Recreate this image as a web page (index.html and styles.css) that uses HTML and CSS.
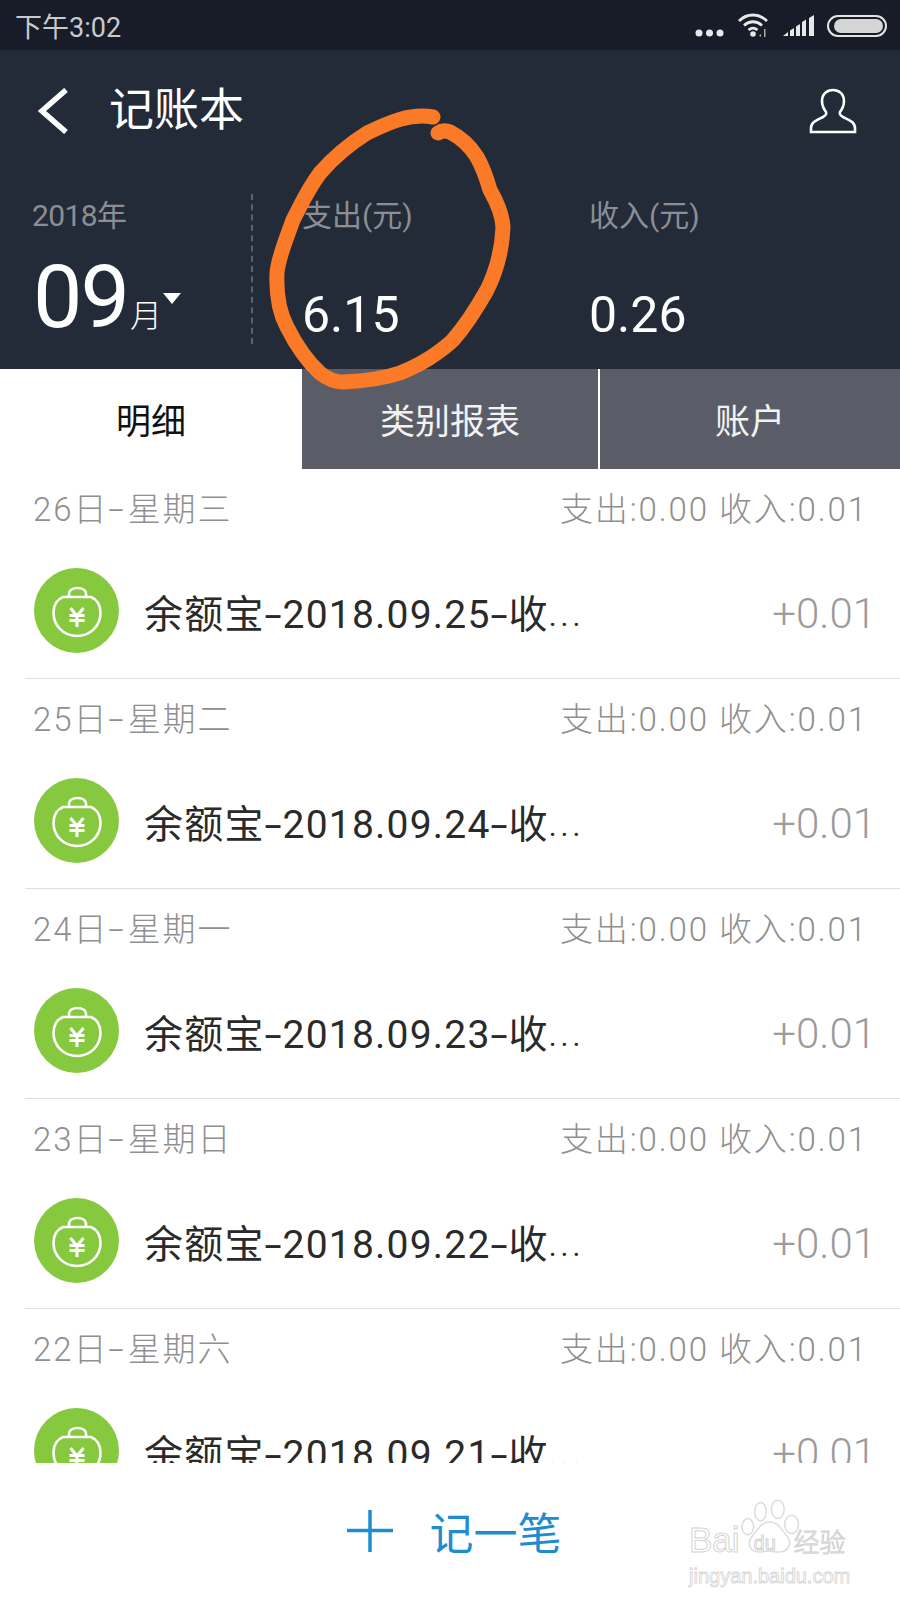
FILE: index.html
```html
<!DOCTYPE html>
<html lang="zh">
<head>
<meta charset="utf-8">
<title>记账本</title>
<link rel="stylesheet" href="styles.css">
</head>
<body>
<svg class="defs" width="0" height="0" aria-hidden="true">
  <symbol id="bag" viewBox="0 0 85 85">
    <circle cx="42.500" cy="42.500" r="42.500" fill="#86c93f"/>
    <path d="M29 29C22 32 19.500 38 19.500 45 19.500 58 30 68 43 68S66.500 58 66.500 45C66.500 38 64 32 57 29Z" fill="none" stroke="#fff" stroke-width="2.600"/>
    <path d="M35 29V26C35 22 39 20 43.500 20S52 22 52 26V29" fill="none" stroke="#fff" stroke-width="2.600"/>
    <path d="M36.500 40l6.500 8 6.500-8M35.500 47.500h15M35.500 52.500h15M43 48v11" fill="none" stroke="#fff" stroke-width="3"/>
  </symbol>
</svg>
<main class="phone">
  <div class="status">
    <span class="time">下午3:02</span>
    <div class="status-icons">
      <svg class="dots" width="30" height="8" viewBox="0 0 30 8"><circle cx="4" cy="4" r="3.500"/><circle cx="14.500" cy="4" r="3.500"/><circle cx="25" cy="4" r="3.500"/></svg>
      <svg class="wifi" width="34" height="26" viewBox="0 0 34 26"><path d="M2 9C10 1 22 1 30 9M7 13.500c5.500-5 12.500-5 18 0M11.500 18c3-2.500 6-2.500 9 0" fill="none" stroke="#e8e8e8" stroke-width="2.800"/><circle cx="16" cy="22" r="2.800" fill="#e8e8e8"/><path d="M27 17v8h1.500v-8ZM24 22l-2 1.500 2 1.500Z" fill="#aaa"/></svg>
      <svg class="signal" width="32" height="22" viewBox="0 0 32 22"><path d="M0 21l5-4v4ZM7 15.500l4-2.500v8H7ZM13 11.500l4-2.500v12h-4ZM19 7l4-2.500V21h-4ZM26 3l5-3v21h-5Z" fill="#e8e8e8"/></svg>
      <div class="battery"><div class="battery-fill"></div></div>
    </div>
  </div>
  <header class="head">
    <div class="nav">
      <svg class="back" width="32" height="46" viewBox="0 0 32 46"><path d="M28 2 4 23l24 21" fill="none" stroke="#fff" stroke-width="5.500"/></svg>
      <h1 class="title">记账本</h1>
      <svg class="user" width="48" height="46" viewBox="0 0 48 46"><path d="M17 24c-3-4-4-8-4-11C13 6 18 2 24 2s11 4 11 11c0 3-1 7-4 11-1 2 0 3 3 5 6 3 12 5 12 11v4H2v-4c0-6 6-8 12-11 3-2 4-3 3-5Z" fill="none" stroke="#fff" stroke-width="2.600"/></svg>
    </div>
    <div class="summary">
      <div class="month">
        <div class="label year">2018年</div>
        <div class="month-val"><span class="big">09</span><span class="mo">月</span><span class="caret"></span></div>
      </div>
      <div class="stat stat-out">
        <div class="label">支出(元)</div>
        <div class="num">6.15</div>
      </div>
      <div class="stat">
        <div class="label">收入(元)</div>
        <div class="num">0.26</div>
      </div>
    </div>
  </header>
  <nav class="tabs">
    <div class="tab tab-on">明细</div>
    <div class="tab tab-mid">类别报表</div>
    <div class="tab">账户</div>
  </nav>
  <section class="list">
    <article class="group">
      <div class="date"><span>26日<b>-</b>星期三</span><span>支出:0.00 收入:0.01</span></div>
      <div class="item"><svg class="ico"><use href="#bag"/></svg><span class="name">余额宝<b>-</b>2018.09.25<b>-</b>收<i>...</i></span><span class="amt">+0.01</span></div>
    </article>
    <article class="group">
      <div class="date"><span>25日<b>-</b>星期二</span><span>支出:0.00 收入:0.01</span></div>
      <div class="item"><svg class="ico"><use href="#bag"/></svg><span class="name">余额宝<b>-</b>2018.09.24<b>-</b>收<i>...</i></span><span class="amt">+0.01</span></div>
    </article>
    <article class="group">
      <div class="date"><span>24日<b>-</b>星期一</span><span>支出:0.00 收入:0.01</span></div>
      <div class="item"><svg class="ico"><use href="#bag"/></svg><span class="name">余额宝<b>-</b>2018.09.23<b>-</b>收<i>...</i></span><span class="amt">+0.01</span></div>
    </article>
    <article class="group">
      <div class="date"><span>23日<b>-</b>星期日</span><span>支出:0.00 收入:0.01</span></div>
      <div class="item"><svg class="ico"><use href="#bag"/></svg><span class="name">余额宝<b>-</b>2018.09.22<b>-</b>收<i>...</i></span><span class="amt">+0.01</span></div>
    </article>
    <article class="group">
      <div class="date"><span>22日<b>-</b>星期六</span><span>支出:0.00 收入:0.01</span></div>
      <div class="item"><svg class="ico"><use href="#bag"/></svg><span class="name">余额宝<b>-</b>2018.09.21<b>-</b>收<i>...</i></span><span class="amt">+0.01</span></div>
    </article>
  </section>
  <footer class="foot">
    <svg class="plus" width="46" height="42" viewBox="0 0 46 42"><path d="M0 20.500h46M23 0v42" stroke="#1e8ccf" stroke-width="3.500"/></svg>
    <span class="add">记一笔</span>
  </footer>
  <div class="mark">
    <svg class="paw" width="66" height="60" viewBox="0 0 56 52"><g fill="#fff" stroke="#dcdcdc" stroke-width="1.300"><ellipse cx="18" cy="11" rx="5" ry="8"/><ellipse cx="33" cy="9" rx="5.500" ry="8"/><ellipse cx="7" cy="24" rx="5" ry="7"/><ellipse cx="45" cy="22" rx="6" ry="8"/><path d="M26 20c8 0 10 7 15 12 5 6 1 14-7 14-4 0-6-1-9-1s-5 1-8 1c-9 0-11-8-6-14 5-5 7-12 15-12Z"/></g></svg>
    <div class="mark-top"><span>Bai</span><span class="du">du</span><span class="jy">经验</span></div>
    <div class="mark-url">jingyan.baidu.com</div>
  </div>
  <svg class="scribble" width="900" height="400" viewBox="0 0 900 400"><path d="M433 117C410 113 390 122 367 133 345 147 333 158 320 173 306 192 300 207 293 220 286 240 278 258 277 273 276 296 279 312 287 327 297 347 308 362 320 373 330 381 337 382 343 382 365 381 385 378 400 373 415 367 426 361 437 353 444 348 448 345 453 340 468 323 478 306 487 290 496 272 502 250 503 227 502 213 497 202 490 190 486 176 482 166 477 157 470 146 460 137 450 132 445 130 441 131 438 133" fill="none" stroke="#fb7a28" stroke-width="15" stroke-linecap="round" stroke-linejoin="round"/></svg>
</main>
</body>
</html>
```
FILE: styles.css
```css
* { box-sizing: border-box; }
html, body { margin: 0; padding: 0; background: #fff; }
body { font-family: Roboto, "Noto Sans CJK SC", sans-serif; font-weight: 300; }
.defs { position: absolute; }
.phone { position: relative; width: 900px; height: 1600px; overflow: hidden; display: flex; flex-direction: column; background: #fff; }

.status { height: 50px; flex: none; background: #171c28; display: flex; align-items: center; justify-content: space-between; padding: 0 13px 0 15px; }
.time { font-size: 27px; color: #c9cacc; font-weight: 400; }
.status-icons { display: flex; align-items: flex-end; }
.dots { fill: #e8e8e8; margin: 0 12px 1px 0; }
.wifi { margin: 0 12px 0 0; }
.signal { margin: 0 12px 1px 0; }
.battery { width: 60px; height: 22px; border: 2px solid #e4e4e4; border-radius: 11px; padding: 2px; margin-bottom: 1px; }
.battery-fill { height: 100%; background: #d6d6d6; border-radius: 7px; margin-left: 3px; }

.head { height: 319px; flex: none; background: #232b39; color: #fff; }
.nav { height: 114px; display: flex; align-items: center; padding: 8px 43px 0 38px; }
.back { flex: none; margin-right: 39px; }
.title { margin: 0; flex: 1; font-size: 45px; font-weight: 400; line-height: 60px; }
.user { flex: none; }
.summary { display: flex; height: 150px; margin-top: 30px; }
.label { font-size: 30px; line-height: 40px; margin-top: 2px; color: #8b8e95; font-weight: 400; }
.year { letter-spacing: -0.6px; margin-left: -1px; }
.month { width: 253px; padding-left: 33px; border-right: 2px dashed #5d626d; }
.month-val { display: flex; align-items: baseline; margin-top: 16px; line-height: 90px; }
.big { font-size: 88px; letter-spacing: -2px; font-weight: 400; }
.mo { font-size: 32px; margin-left: 2px; }
.caret { width: 0; height: 0; border: 9px solid transparent; border-top: 11px solid #fff; border-bottom: 0; align-self: flex-start; margin: 41px 0 0 1px; }
.stat { width: 287px; padding-left: 49px; }
.stat-out { width: 287px; }
.num { font-size: 50px; line-height: 60px; margin-top: 49px; color: #fff; font-weight: 400; }

.tabs { height: 100px; flex: none; display: flex; font-size: 35px; font-weight: 400; }
.tab { flex: 1; display: flex; align-items: center; justify-content: center; padding-bottom: 2px; background: #5a5d68; color: #f2f2f2; }
.tab-on { flex: none; width: 302px; background: #fff; color: #111; }
.tab-mid { flex: none; width: 298px; border-right: 2px solid #fff; }

.list { flex: 1; min-height: 0; overflow: hidden; }
.group { height: 210px; display: flex; flex-direction: column; margin-left: 25px; border-bottom: 1px solid #dedede; }
.date { height: 76px; flex: none; display: flex; align-items: center; justify-content: space-between; padding: 0 32px 0 8px; font-size: 33px; letter-spacing: 1.9px; color: #8f8f8f; font-weight: 300; }
.date b { display: inline-block; font-weight: 300; margin: 0 4px; transform: scaleX(1.7); }
.item { flex: 1; display: flex; align-items: center; padding: 0 24px 2px 9px; }
.ico { width: 85px; height: 85px; flex: none; }
.name { flex: 1; margin-left: 25px; font-size: 39px; letter-spacing: 1.2px; color: #2a2a2a; font-weight: 400; white-space: nowrap; }
.name b { display: inline-block; font-weight: 400; margin: 0 3px; transform: scaleX(1.6); }
.name i { font-style: normal; font-size: 30px; letter-spacing: 4px; vertical-align: 2px; }
.amt { flex: none; font-size: 42px; color: #9b9b9b; font-weight: 300; margin-top: 6px; }

.foot { height: 137px; flex: none; background: #fff; display: flex; align-items: center; justify-content: center; padding: 0 0 2px 8px; }
.plus { flex: none; margin-right: 37px; }
.add { font-size: 44px; color: #1e8ccf; font-weight: 400; }

.mark { position: absolute; left: 689px; top: 1515px; width: 170px; }
.paw { position: absolute; left: 50px; top: -16px; }
.mark-top { position: relative; display: flex; align-items: center; height: 50px; font-family: "Liberation Sans", "Noto Sans CJK SC", sans-serif; font-size: 35px; color: #fff; -webkit-text-stroke: 1px #d4d4d4; }
.du { font-size: 20px; width: 32px; margin: 6px 0 0 14px; }
.jy { font-size: 26px; margin-left: 8px; }
.mark-url { position: relative; font-family: "Liberation Sans", sans-serif; font-size: 20px; color: #fff; -webkit-text-stroke: 0.8px #d4d4d4; white-space: nowrap; }

.scribble { position: absolute; left: 0; top: 0; }
```
